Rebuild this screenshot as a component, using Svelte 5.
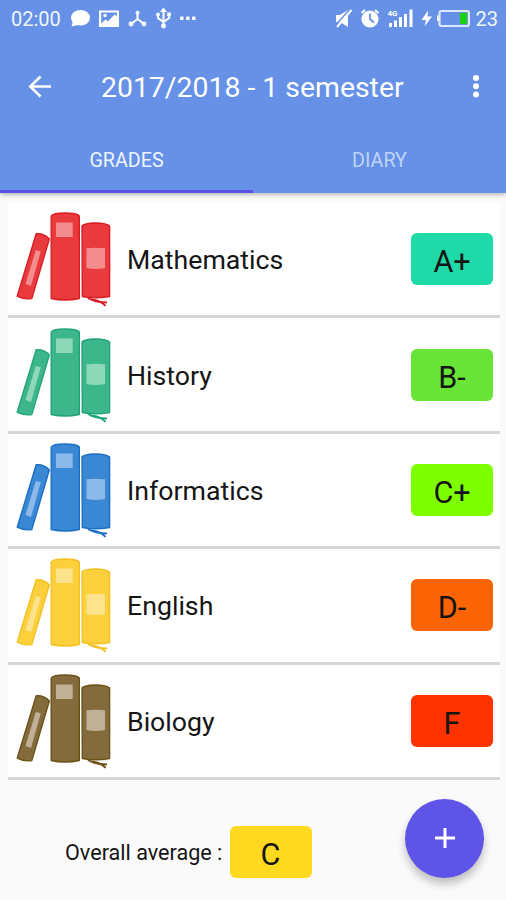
<script lang="ts">
	interface Subject {
		name: string;
		grade: string;
		badge: string;
		book: string;
		edge: string;
		label: string;
	}

	const tabs = ['GRADES', 'DIARY'];
	let activeTab = $state('GRADES');

	const subjects: Subject[] = [
		{ name: 'Mathematics', grade: 'A+', badge: '#20d9a9', book: '#e93a3d', edge: '#d91d25', label: '#f38c8e' },
		{ name: 'History', grade: 'B-', badge: '#67e436', book: '#3eb68b', edge: '#20a577', label: '#8cd8b9' },
		{ name: 'Informatics', grade: 'C+', badge: '#7eff00', book: '#3a87d3', edge: '#1b6fc5', label: '#8bbaea' },
		{ name: 'English', grade: 'D-', badge: '#fb6404', book: '#fcd03d', edge: '#f3c122', label: '#fde38c' },
		{ name: 'Biology', grade: 'F', badge: '#ff3300', book: '#846b3b', edge: '#6b5216', label: '#bfb196' },
	];
</script>

<div class="screen">
	<header>
		<div class="statusbar">
			<span class="clock">02:00</span>
			<svg class="left-icons" viewBox="68 0 132 37" width="132" height="37">
				<g fill="#fff">
					<ellipse cx="80.5" cy="17.7" rx="9.5" ry="7.8" />
					<path d="M73 21 L71.5 26.5 L80 24.5 Z" />
					<path fill-rule="evenodd" d="M99 10.5 H119 V27 H99 Z M101.2 12.5 V23.5 L105.5 19.5 L108 21.5 L114.5 14.5 L116.8 16.5 V12.5 Z" />
					<circle cx="105" cy="15.5" r="1.7" />
					<circle cx="137.5" cy="12.8" r="2" />
					<circle cx="131" cy="24" r="2.4" />
					<circle cx="144" cy="24" r="2.4" />
					<path d="M163.5 7.5 L167 12 H160 Z" />
					<circle cx="163.5" cy="26" r="2.4" />
					<circle cx="158" cy="14.5" r="1.9" />
					<rect x="167.2" y="12.5" width="3.6" height="3.6" />
					<rect x="180" y="16.5" width="3.6" height="3.6" rx="1" />
					<rect x="186" y="16.5" width="3.6" height="3.6" rx="1" />
					<rect x="192" y="16.5" width="3.6" height="3.6" rx="1" />
				</g>
				<g fill="none" stroke="#fff" stroke-width="2">
					<path d="M137.5 12 V19 L131 24 M137.5 19 L144 24" />
					<path d="M163.5 10 V26 M158 14 V18 L163.5 22 L169.2 18 V14" />
				</g>
			</svg>
			<svg class="right-icons" viewBox="332 0 140 37" width="140" height="37">
				<g fill="#fff">
					<path d="M336 15 H340 L348 10 V27 L340 22 H336 Z" />
					<circle cx="370" cy="19" r="8.6" />
					<rect x="389" y="23" width="3" height="4" />
					<rect x="394" y="20.5" width="3" height="6.5" />
					<rect x="399" y="17" width="3" height="10" />
					<rect x="404" y="14" width="3" height="13" />
					<rect x="409.5" y="9.5" width="3" height="17.5" />
					<path d="M428 10.5 L421.5 20 H426 L424.5 26.5 L432 16.5 H427.5 Z" />
					<rect x="437" y="15.5" width="3" height="5.5" />
				</g>
				<path d="M349.5 9.5 L335 26" stroke="#6691e6" stroke-width="1.5" />
				<path d="M351.5 10 L337 27" stroke="#fff" stroke-width="2" />
				<path d="M361.5 13 L365 10 M375 10 L378.5 13" stroke="#fff" stroke-width="2" />
				<path d="M370 13.5 V19 L374 22.5" fill="none" stroke="#6691e6" stroke-width="1.8" />
				<text x="387.5" y="16" class="network">4G</text>
				<rect x="439.5" y="11" width="29.5" height="15" rx="2" fill="none" stroke="#dce8fb" stroke-width="2.2" />
				<rect x="460" y="13" width="7" height="11" fill="#1bd00f" />
			</svg>
			<span class="battery">23</span>
		</div>

		<div class="toolbar">
			<button class="back" aria-label="Back">
				<svg viewBox="0 0 24 24" width="24" height="24">
					<path d="M23 11.5 H2 M12.5 1.5 L2.3 11.5 L12.5 21.5" fill="none" stroke="#fff" stroke-width="2.6" />
				</svg>
			</button>
			<h1>2017/2018 - 1 semester</h1>
			<button class="more" aria-label="More options">
				<svg viewBox="0 0 8 24" width="8" height="24">
					<g fill="#fff">
						<circle cx="4" cy="3" r="3" />
						<circle cx="4" cy="11.3" r="3" />
						<circle cx="4" cy="19.6" r="3" />
					</g>
				</svg>
			</button>
		</div>

		<nav>
			{#each tabs as tab}
				<button class="tab" class:active={tab === activeTab} onclick={() => (activeTab = tab)}>{tab}</button>
			{/each}
		</nav>
	</header>

	<ul>
		{#each subjects as subject}
			<li>
				<svg class="books" viewBox="14 203 100 112" width="100" height="112">
					<g fill={subject.book} stroke={subject.edge} stroke-width="1.4" stroke-linejoin="round">
						<path d="M36.2 233.8 Q44 233 49.3 239 L31.8 298.6 Q24 299.8 17.2 296.2 Z" />
						<path d="M51.2 216 Q53 213 65 213 Q77 213 79.3 216 V298.5 Q65 301.5 51.2 298.5 Z" />
						<path d="M82 226 Q84 223.3 95.5 223 Q107 223.3 109.6 226 V296.5 Q95 299 82.3 296.5 Z" />
					</g>
					<g fill={subject.label}>
						<path d="M35.8 250 L40.8 251.2 L31 286 L25.5 284 Z" />
						<path d="M56 222.5 H72.7 V237 H56 Z" />
						<path d="M86.5 248.3 Q95.5 247.3 105 248.3 V268 Q95.5 270 86.5 268 Z" />
					</g>
					<g fill="none" stroke={subject.edge} stroke-width="1.9">
						<path d="M88 298 Q95 302.3 107 302.5" />
						<path d="M92 299.5 Q102 301 105.5 306" />
					</g>
				</svg>
				<span class="name">{subject.name}</span>
				<span class="badge" style="background: {subject.badge}">{subject.grade}</span>
			</li>
		{/each}
	</ul>

	<footer>
		<span class="average">Overall average :</span>
		<span class="badge total">C</span>
		<button class="fab" aria-label="Add grade">
			<svg viewBox="0 0 20 20" width="20" height="20">
				<path d="M10 0 V20 M0 10 H20" stroke="#fff" stroke-width="3" />
			</svg>
		</button>
	</footer>
</div>

<style>
	:global(body) {
		margin: 0;
	}
	.screen {
		width: 506px;
		height: 900px;
		overflow: hidden;
		display: flex;
		flex-direction: column;
		background: #fafafa;
		font-family: Roboto, sans-serif;
		color: #151515;
	}
	button {
		padding: 0;
		border: none;
		background: none;
		font-family: inherit;
		cursor: pointer;
	}
	svg {
		display: block;
		flex: none;
	}

	header {
		flex: none;
		height: 193px;
		background: #6691e6;
		color: #fff;
		box-shadow: 0 1px 5px rgba(0, 0, 0, 0.35);
	}
	.statusbar {
		display: flex;
		align-items: center;
		height: 37px;
		padding: 0 8px 0 11px;
		font-size: 20px;
		color: #f0f5ff;
	}
	.clock {
		width: 57px;
	}
	.right-icons {
		margin-left: auto;
	}
	.battery {
		width: 26px;
		text-align: right;
	}
	.network {
		font-size: 8px;
		font-weight: 700;
		fill: #fff;
	}

	.toolbar {
		display: flex;
		align-items: center;
		height: 100px;
		padding: 0 26px 0 28px;
	}
	h1 {
		flex: 1;
		margin: 0 0 0 49px;
		font-size: 28.4px;
		font-weight: 400;
		white-space: nowrap;
	}

	nav {
		display: flex;
		height: 56px;
	}
	.tab {
		flex: 1;
		padding-bottom: 7px;
		border-bottom: 3px solid transparent;
		font-size: 19.7px;
		color: #bfd4f7;
	}
	.tab.active {
		color: #eef4ff;
		border-bottom-color: #5a52e2;
	}

	ul {
		flex: none;
		margin: 10px 6px 0 8px;
		padding: 0;
		list-style: none;
	}
	li {
		display: flex;
		align-items: center;
		box-sizing: border-box;
		height: 115.4px;
		padding: 0 7px 0 6px;
		border-bottom: 3px solid #d5d5d5;
		background: #fff;
	}
	.name {
		flex: 1;
		padding: 2px 0 0 13px;
		font-size: 26.7px;
	}
	.badge {
		width: 82px;
		height: 52px;
		border-radius: 6px;
		font-size: 30.5px;
		line-height: 57px;
		text-align: center;
	}

	footer {
		flex: 1;
		display: flex;
		align-items: center;
		padding: 19px 22px 0 65px;
	}
	.average {
		width: 164.5px;
		padding-top: 1px;
		font-size: 21.6px;
		white-space: nowrap;
	}
	.total {
		background: #ffd91f;
	}
	.fab {
		display: flex;
		align-items: center;
		justify-content: center;
		width: 79px;
		height: 79px;
		margin: 0 0 27px auto;
		border-radius: 50%;
		background: #5f54e8;
		box-shadow: 0 6px 8px rgba(0, 0, 0, 0.24);
	}
</style>
